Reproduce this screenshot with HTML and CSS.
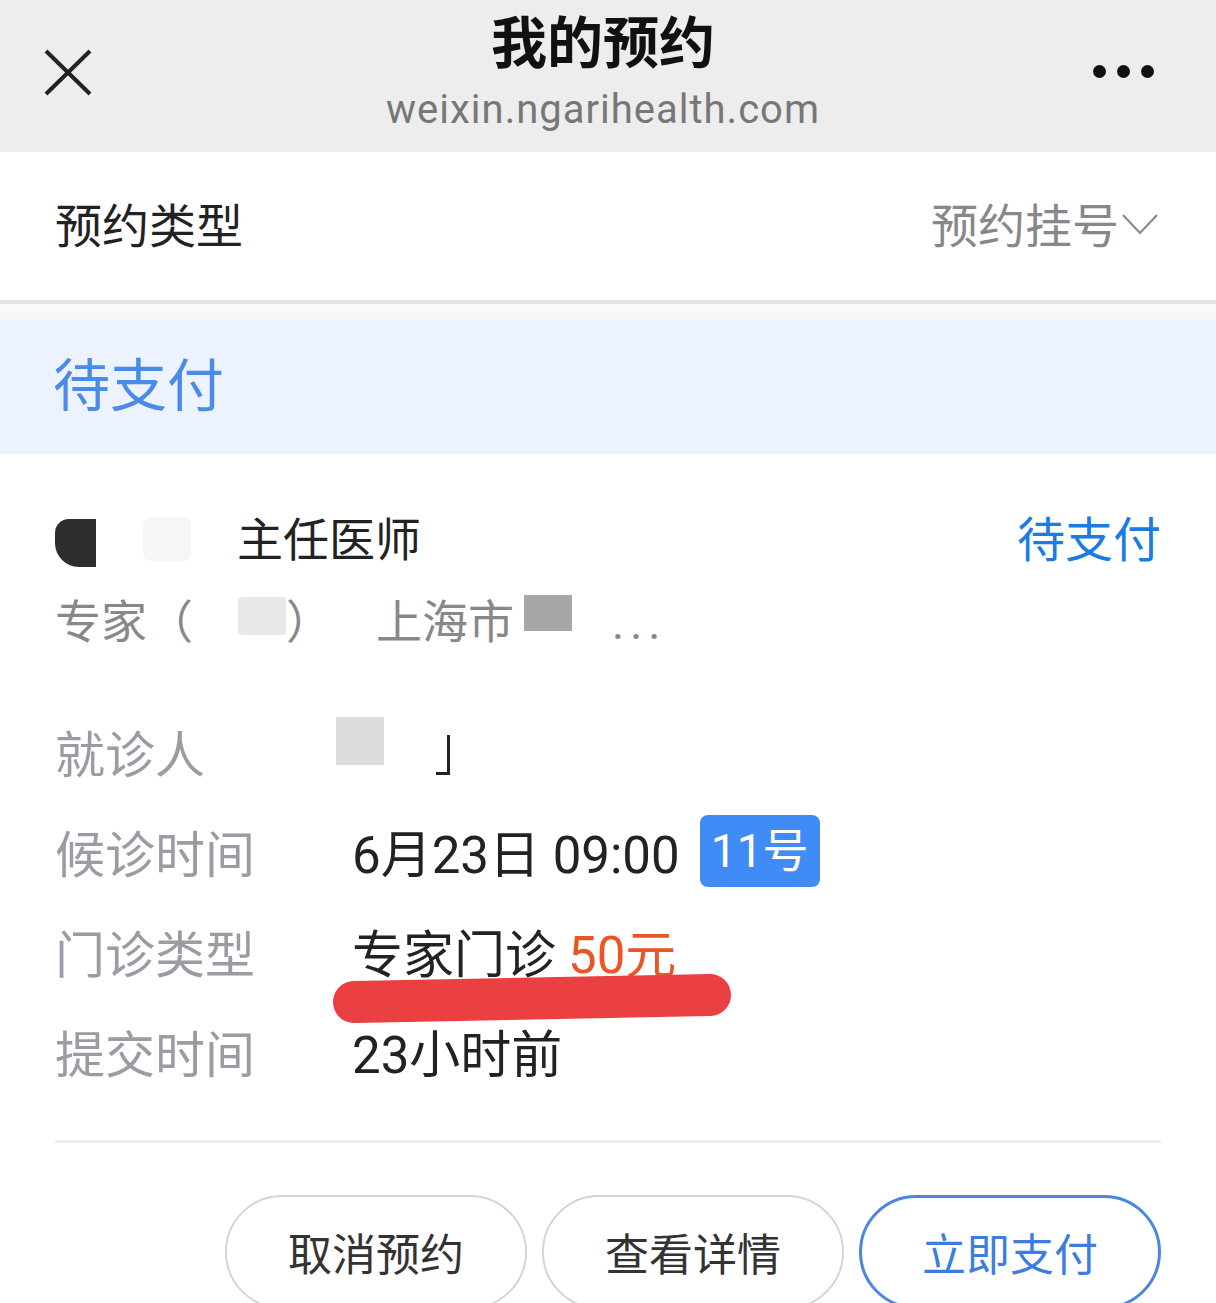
FILE: index.html
```html
<!DOCTYPE html>
<html lang="zh-CN">
<head>
    <meta charset="UTF-8">
    <meta name="viewport" content="width=device-width, initial-scale=1.0">
    <title>我的预约</title>
    <link rel="stylesheet" href="styles.css">
</head>
<body>
    <div class="topbar">
        <span class="close">
            <svg width="50" height="50" viewBox="0 0 50 50">
                <path d="M3 3 L47 46 M47 3 L3 46" stroke="#222" stroke-width="4" fill="none"/>
            </svg>
        </span>
        <div class="title-box">
            <div class="title">我的预约</div>
            <div class="domain">weixin.ngarihealth.com</div>
        </div>
        <span class="more">
            <i></i><i></i><i></i>
        </span>
    </div>

    <!-- 预约类型 -->
    <div class="type-row">
        <span class="type-label">预约类型</span>
        <span class="type-value">预约挂号
            <svg width="40" height="24" viewBox="0 0 40 24">
                <polyline points="2,3 19,21 36,3" stroke="#8a8a8a" stroke-width="2.2" fill="none"/>
            </svg>
        </span>
    </div>
    <div class="strip"></div>
    <div class="status-bar">待支付</div>

    <div class="card">
        <div class="doctor-row">
            <div class="doctor-name">
                <span class="mask-dark"></span>
                <span class="mask-light"></span>
                <span class="doc-title">主任医师</span>
            </div>
            <span class="doc-status">待支付</span>
        </div>
        <div class="dept-row">
            <span>专家（</span><span class="mask-pale"></span><span>）</span>
            <span class="hospital">上海市</span><span class="mask-grey"></span>
            <span class="dots">...</span>
        </div>

        <div class="info">
            <div class="info-row">
                <span class="label">就诊人</span>
                <span class="value"><span class="mask-patient"></span><span class="mask-mark"></span></span>
            </div>
            <div class="info-row">
                <span class="label">候诊时间</span>
                <span class="value">6月23日 09:00<span class="num-tag">11号</span></span>
            </div>
            <div class="info-row">
                <span class="label">门诊类型</span>
                <span class="value">专家门诊 <span class="price">50元</span></span>
            </div>
            <div class="info-row">
                <span class="label">提交时间</span>
                <span class="value">23小时前</span>
            </div>
            <!-- 红色涂抹 -->
            <svg class="scribble" width="402" height="50" viewBox="0 0 402 50">
                <path d="M23 28 Q 200 24 379 21" stroke="#ea4042" stroke-width="42" stroke-linecap="round" fill="none"/>
            </svg>
        </div>

        <div class="divider"></div>

        <div class="actions">
            <button class="btn">取消预约</button>
            <button class="btn">查看详情</button>
            <button class="btn btn-pay">立即支付</button>
        </div>
    </div>
</body>
</html>
```

FILE: styles.css
```css
* {
    margin: 0;
    padding: 0;
    box-sizing: border-box;
}

body {
    font-family: Roboto, "Noto Sans CJK SC", sans-serif;
    background-color: #fff;
    color: #222;
    overflow: hidden;
}

/* 顶部栏 */
.topbar {
    height: 152px;
    background-color: #ededed;
    display: flex;
    align-items: center;
    justify-content: space-between;
    padding: 0 62px 0 43px;
}

.close {
    display: flex;
    margin-top: -6px;
}

.title-box {
    text-align: center;
    margin-left: 20px;
}

.title {
    font-size: 56px;
    font-weight: bold;
    color: #111;
    line-height: 70px;
    margin-top: -8px;
}

.domain {
    font-size: 40px;
    letter-spacing: 1px;
    color: #777;
    line-height: 50px;
    margin-top: 6px;
}

.more {
    display: flex;
    gap: 11px;
    margin-top: -10px;
}

.more i {
    width: 13px;
    height: 13px;
    border-radius: 50%;
    background-color: #111;
}

.type-row {
    height: 152px;
    display: flex;
    align-items: center;
    justify-content: space-between;
    padding: 0 55px 8px;
    border-bottom: 4px solid #e3e3e3;
}

.type-label {
    font-size: 47px;
    color: #222;
}

.type-value {
    font-size: 47px;
    color: #888;
    display: flex;
    align-items: center;
}

.type-value svg {
    margin-left: 2px;
    margin-top: 4px;
}

.strip {
    height: 16px;
    background: linear-gradient(#fafafa, #f3f5f8);
}

.status-bar {
    height: 134px;
    background-color: #ecf3fe;
    color: #4a8ae8;
    font-size: 57px;
    line-height: 134px;
    padding-left: 53px;
}

/* 卡片 */
.card {
    padding: 52px 55px 0;
}

.doctor-row {
    display: flex;
    justify-content: space-between;
    align-items: center;
    height: 60px;
}

.doctor-name {
    display: flex;
    align-items: center;
}

.mask-dark {
    width: 41px;
    height: 48px;
    background-color: #2e2e2e;
    border-radius: 14px 0 0 24px;
    margin-top: 14px;
}

.mask-light {
    width: 48px;
    height: 44px;
    background-color: #f6f6f6;
    border-radius: 8px;
    margin-left: 47px;
    margin-top: 6px;
}

.doc-title {
    font-size: 46px;
    margin-left: 46px;
}

.doc-status {
    font-size: 48px;
    color: #1a7be2;
}

.dept-row {
    margin-top: 22px;
    height: 60px;
    display: flex;
    align-items: center;
    font-size: 46px;
    color: #888;
}

.mask-pale {
    width: 48px;
    height: 38px;
    background-color: #e8e8e8;
    border-radius: 4px;
    margin-left: 45px;
    margin-top: -4px;
}

.hospital {
    margin-left: 44px;
}

.mask-grey {
    width: 48px;
    height: 36px;
    background-color: #a6a6a6;
    margin-left: 10px;
    margin-top: -10px;
}

.dots {
    margin-left: 40px;
    letter-spacing: 6px;
    margin-top: 10px;
}

.info {
    position: relative;
    margin-top: 53px;
}

.info-row {
    height: 100px;
    display: flex;
    align-items: center;
}

.label {
    width: 297px;
    font-size: 50px;
    color: #9b9ba3;
}

.value {
    font-size: 51px;
    color: #222;
    display: flex;
    align-items: center;
}

.mask-patient {
    width: 48px;
    height: 48px;
    background-color: #dcdcdc;
    margin-left: -16px;
    margin-top: -20px;
}

.mask-mark {
    width: 14px;
    height: 40px;
    border-right: 3px solid #222;
    border-bottom: 3px solid #222;
    margin-left: 52px;
    margin-top: 8px;
}

.num-tag {
    margin-left: 20px;
    width: 120px;
    height: 72px;
    line-height: 72px;
    text-align: center;
    background-color: #3f8cf7;
    color: #fff;
    font-size: 46px;
    border-radius: 8px;
}

.price {
    color: #ea5528;
    margin-left: 12px;
}

.scribble {
    position: absolute;
    left: 276px;
    top: 273px;
}

.divider {
    margin-top: 39px;
    height: 3px;
    background-color: #eeeeee;
}

.actions {
    margin-top: 52px;
    display: flex;
    justify-content: flex-end;
    gap: 15px;
}

.btn {
    width: 302px;
    height: 114px;
    border-radius: 60px;
    border: 2.5px solid #d4d4d4;
    background-color: #fff;
    font-family: "Noto Sans CJK SC", sans-serif;
    font-size: 44px;
    color: #333;
}

.btn-pay {
    border: 3px solid #4a86e0;
    color: #3b7ee0;
}
```
